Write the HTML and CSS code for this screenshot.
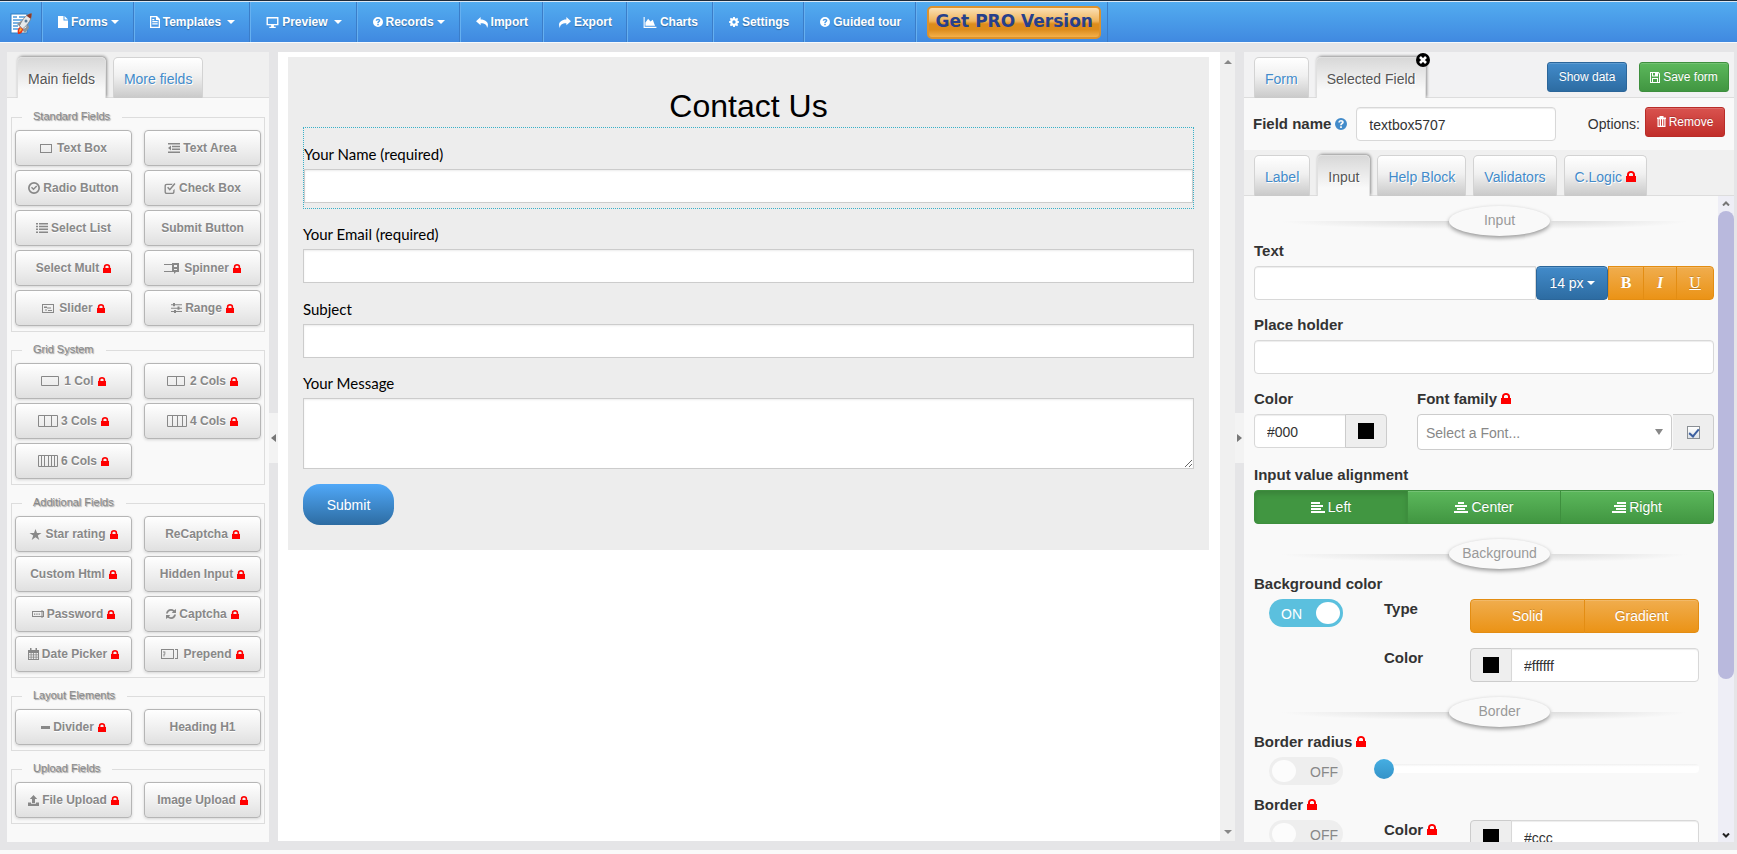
FILE: index.html
```html
<!DOCTYPE html>
<html lang="en">
<head>
<meta charset="utf-8">
<title>Form builder</title>
<link rel="stylesheet" href="styles.css">
</head>
<body>
<svg class="sprite" aria-hidden="true">
  <symbol id="i-lock" viewBox="0 0 10 11"><path fill-rule="evenodd" d="M1 5V3.5C1 1.300 2.600 0 5 0s4 1.300 4 3.500V5h1v6H0V5zM3 5h4V3.500C7 2.500 6.200 2 5 2s-2 .5-2 1.500z"/></symbol>
  <symbol id="i-file" viewBox="0 0 10 12"><path d="M0 0h5.500v4.500H10V12H0zM6.500 0 10 3.500H6.500z"/></symbol>
  <symbol id="i-doc" viewBox="0 0 10 12"><path fill-rule="evenodd" d="M0 0h7l3 3v9H0zm1.300 1.300v9.400h7.400V4H6V1.300zM2.300 5h5.400v1.200H2.300zm0 2.300h5.400v1.200H2.300zM2.300 3h2v1.200h-2z"/></symbol>
  <symbol id="i-screen" viewBox="0 0 13 12"><path fill-rule="evenodd" d="M0 0h13v9H8v1.500h2V12H3v-1.500h2V9H0zm1.500 1.500v6h10v-6z"/></symbol>
  <symbol id="i-help" viewBox="0 0 12 12"><path fill-rule="evenodd" d="M6 0a6 6 0 1 1 0 12A6 6 0 0 1 6 0zM3.300 4.500h1.800c0-.7.4-1 .9-1s.9.3.9.8c0 .9-1.800 1-1.800 2.900h1.700c0-1.200 2-1.300 2-3C8.800 2.900 7.600 2 6.100 2 4.400 2 3.300 3 3.300 4.500zM5.100 8.200v1.700h1.800V8.200z"/></symbol>
  <symbol id="i-import" viewBox="0 0 13 12"><path d="M0 4.500 5 0v2.700c5 0 8 2.800 8 5.800 0 1.300-.4 2.500-1 3.500C12 8.500 10 6.700 5 6.700V9z"/></symbol>
  <symbol id="i-export" viewBox="0 0 13 12"><path d="M13 4.500 8 0v2.700C3 2.700 0 5.500 0 8.500 0 9.800.4 11 1 12 1 8.500 3 6.700 8 6.700V9z"/></symbol>
  <symbol id="i-chart" viewBox="0 0 14 12"><path d="M0 0h1.200v10.500H14V12H0zM2 9.500V6l3-4 2.500 3L10 3l2.500 6.500z"/></symbol>
  <symbol id="i-gear" viewBox="0 0 12 12"><path fill-rule="evenodd" d="m5 0h2l.3 1.600 1 .4L9.700 1 11 2.300l-.9 1.400.4 1L12 5v2l-1.500.3-.4 1 .9 1.400L9.700 11l-1.400-.9-1 .4L7 12H5l-.3-1.500-1-.4-1.400.9L1 9.700l.9-1.400-.4-1L0 7V5l1.500-.3.400-1L1 2.300 2.300 1l1.400.9 1-.3zM6 4a2 2 0 1 0 0 4 2 2 0 0 0 0-4z"/></symbol>
  <symbol id="i-area" viewBox="0 0 12 10"><path d="M0 0h12v1.500H0zM4 2.800h8v1.500H4zM4 5.600h8v1.500H4zM0 8.500h12V10H0zM0 5l3-2.500v5z"/></symbol>
  <symbol id="i-radio" viewBox="0 0 12 12"><path fill-rule="evenodd" d="M6 0a6 6 0 1 1 0 12A6 6 0 0 1 6 0zm0 1.700a4.300 4.300 0 1 0 0 8.600 4.300 4.300 0 0 0 0-8.600zM3 5.700l1-1 1.500 1.500L8.200 3.500l1 1-3.700 3.800z"/></symbol>
  <symbol id="i-check" viewBox="0 0 12 12"><path d="M9 .8H2.500C1 .8 0 1.800 0 3.200v6.300C0 11 1 12 2.500 12h6c1.500 0 2.500-1 2.500-2.500V6.500L9.500 8v1.500c0 .6-.4 1-1 1h-6c-.6 0-1-.4-1-1V3.200c0-.6.4-1 1-1H8zM2.800 5.300 4 4.200l1.800 1.700L10.700 0 12 1.200 5.800 8.500z"/></symbol>
  <symbol id="i-list" viewBox="0 0 12 10"><path d="M0 0h2v1.500H0zM3 0h9v1.500H3zM0 2.800h2v1.500H0zM3 2.800h9v1.500H3zM0 5.600h2v1.500H0zM3 5.600h9v1.500H3zM0 8.500h2V10H0zM3 8.500h9V10H3z"/></symbol>
  <symbol id="i-spin" viewBox="0 0 15 11"><path fill-rule="evenodd" d="M0 1h8V0h7v9h-3l-2 2V9H0V8h8V2H0zM10 2v2h3V2zm0 4v1h3V6z"/></symbol>
  <symbol id="i-slider" viewBox="0 0 12 9"><path fill-rule="evenodd" d="M0 0h12v9H0zm1 1v7h10V1zM2 2.500h3V4H2zM5 3.500h4v1H5zM3 5.500h2v1H3zM6 6h4v1H6z"/></symbol>
  <symbol id="i-range" viewBox="0 0 11 10"><path d="M0 1.200h2V0h2v1.200h7v1H4v1H2v-1H0zM0 4.700h6.500V3.500h2v1.200H11v1H8.500v1h-2v-1H0zM0 8h3V7h2v1h6v1H5v1H3V9H0z"/></symbol>
  <symbol id="i-star" viewBox="0 0 12 11"><path d="m6 0 1.500 4H12L8.300 6.500 9.800 11 6 8.300 2.200 11l1.500-4.500L0 4h4.500z"/></symbol>
  <symbol id="i-pass" viewBox="0 0 12 8"><path fill-rule="evenodd" d="M0 1h9.500V0h1v1H12v6h-1.500v1h-1V7H0zm1 1v4h8.500V2zm9.500 0v4h.5V2zM2 3.500h1.300v1.300H2zm2.300 0h1.300v1.300H4.300zm2.300 0h1.300v1.300H6.600z"/></symbol>
  <symbol id="i-refresh" viewBox="0 0 11 11"><path d="M0 5C.3 2 2.500 0 5.500 0c1.400 0 2.600.5 3.600 1.300L11 0v4.500H6.300l1.500-1.700C7.100 2.200 6.400 2 5.500 2 3.800 2 2.500 3.200 2 5zM11 6c-.3 3-2.500 5-5.500 5-1.400 0-2.600-.5-3.600-1.300L0 11V6.500h4.700L3.200 8.200c.7.600 1.400.8 2.300.8C7.200 9 8.500 7.800 9 6z"/></symbol>
  <symbol id="i-cal" viewBox="0 0 11 12"><path fill-rule="evenodd" d="M0 2h2V0h1.500v2h4V0H9v2h2v10H0zm1 3v1.500h1.700V5zm2.500 0v1.500h1.700V5zM6 5v1.500h1.700V5zm2.500 0v1.500H10V5zM1 7.300v1.500h1.700V7.300zm2.500 0v1.500h1.700V7.300zM6 7.300v1.500h1.700V7.300zm2.500 0v1.500H10V7.300zM1 9.600V11h1.700V9.600zm2.500 0V11h1.700V9.600zM6 9.600V11h1.700V9.600zm2.500 0V11H10V9.600z"/></symbol>
  <symbol id="i-prep" viewBox="0 0 17 10"><path fill-rule="evenodd" d="M0 0h13v10H0zm1 1v8h11V1zM2 2.500h2.300V5.500H3.500V7.500h-1V4.800h1V3.500H2zM14 0h3v10h-3V9h2V1h-2z"/></symbol>
  <symbol id="i-upload" viewBox="0 0 11 11"><path d="m5.500 0 3.700 4H7v4H4V4H1.800zM0 7.500h3v1.300h5V7.500h3V11H0z"/></symbol>
  <symbol id="i-save" viewBox="0 0 10 11"><path fill-rule="evenodd" d="M0 0h8.500L10 1.500V11H0zm1 1v9h1V6h6v4h1V2L8 1v3.500H2V1zm2 0v2.500h2V1zm0 6v3h4V7z"/></symbol>
  <symbol id="i-trash" viewBox="0 0 9 11"><path fill-rule="evenodd" d="M2.500 0h4v1.500H9V3H8.500v8h-8V3H0V1.500h2.500zM1.700 3.200v6.600h1V3.200zm2.300 0v6.600h1V3.200zm2.300 0v6.600h1V3.200z"/></symbol>
  <symbol id="i-al" viewBox="0 0 14 11"><path d="M0 0h9v2H0zM0 3h12v2H0zM0 6h10v2H0zM0 9h14v2H0z"/></symbol>
  <symbol id="i-ac" viewBox="0 0 14 11"><path d="M4 0h6v2H4zM1 3h12v2H1zM3 6h8v2H3zM0 9h14v2H0z"/></symbol>
  <symbol id="i-ar" viewBox="0 0 14 11"><path d="M5 0h9v2H5zM2 3h12v2H2zM4 6h10v2H4zM0 9h14v2H0z"/></symbol>
  <symbol id="i-x" viewBox="0 0 14 14"><circle cx="7" cy="7" r="7"/><path d="m4 4 6 6m0-6-6 6" stroke="#fff" stroke-width="2.600"/></symbol>
</svg>

<header class="topbar">
  <a class="logo" href="#" aria-label="Home">
    <svg width="22" height="22" viewBox="0 0 22 22">
      <rect x="1" y="1" width="16" height="19" fill="#fff" stroke="#2f7fc4"/>
      <path d="M3 4h4M9 4h6M3 7h10M3 10h7M3 13h5M3 16h6" stroke="#4f9bdb" stroke-width="1.500"/>
      <path d="M11 16c4 0 6-2 7-5l1 4-4 5z" fill="#8f9499"/>
      <path d="M7 11l4-3 2 1-3 5z" fill="#8f9499"/>
      <path d="M21.500.5c-5 1-8 4-12 12l3 3.500c6-5 9-9 9-15.500z" fill="#e6e9eb" stroke="#777" stroke-width=".8"/>
      <path d="M21.500.5c-2 .4-3.500 1-5 2.200l4 3c.8-1.600 1-3 1-5.200z" fill="#8c3a2a"/>
      <circle cx="16" cy="8" r="1.500" fill="#5b7c99"/>
      <path d="M10 14c-2 1-3 4-2 7 3 0 5-2 5-5z" fill="#e5331c"/><path d="M10.500 15c-1 1-1.500 2-1.500 4 2-.5 2.500-1.500 3-3z" fill="#ffb02e"/>
    </svg>
  </a>
  <nav class="menu">
    <a href="#"><svg class="ic" width="10" height="12"><use href="#i-file"/></svg>Forms<i class="caret"></i></a>
    <a href="#"><svg class="ic" width="10" height="12"><use href="#i-doc"/></svg>Templates<i class="caret wide"></i></a>
    <a href="#"><svg class="ic" width="13" height="11"><use href="#i-screen"/></svg>Preview<i class="caret wide"></i></a>
    <a href="#"><svg class="ic" width="10" height="10"><use href="#i-help"/></svg>Records<i class="caret"></i></a>
    <a href="#"><svg class="ic" width="12" height="11"><use href="#i-import"/></svg>Import</a>
    <a href="#"><svg class="ic" width="12" height="11"><use href="#i-export"/></svg>Export</a>
    <a href="#"><svg class="ic" width="14" height="11"><use href="#i-chart"/></svg>Charts</a>
    <a href="#"><svg class="ic" width="10" height="10"><use href="#i-gear"/></svg>Settings</a>
    <a href="#"><svg class="ic" width="10" height="10"><use href="#i-help"/></svg>Guided tour</a>
    <span class="pro-cell"><button class="pro">Get PRO Version</button></span>
  </nav>
</header>

<main class="workspace">
  <aside class="panel fields">
    <div class="tabs" role="tablist">
      <button class="tab active" role="tab">Main fields</button>
      <button class="tab" role="tab">More fields</button>
    </div>
    <div class="groups">
      <fieldset class="group"><legend>Standard Fields</legend>
        <button class="tool"><svg class="ic gap" width="12" height="9"><rect x=".5" y=".5" width="11" height="8" fill="none" stroke="#888"/></svg>Text Box</button>
        <button class="tool"><svg class="ic" width="12" height="10"><use href="#i-area"/></svg>Text Area</button>
        <button class="tool"><svg class="ic" width="12" height="12"><use href="#i-radio"/></svg>Radio Button</button>
        <button class="tool"><svg class="ic" width="12" height="11"><use href="#i-check"/></svg>Check Box</button>
        <button class="tool"><svg class="ic" width="12" height="10"><use href="#i-list"/></svg>Select List</button>
        <button class="tool">Submit Button</button>
        <button class="tool">Select Mult<svg class="lock"><use href="#i-lock"/></svg></button>
        <button class="tool"><svg class="ic gap" width="15" height="11"><use href="#i-spin"/></svg>Spinner<svg class="lock"><use href="#i-lock"/></svg></button>
        <button class="tool"><svg class="ic gap" width="12" height="9"><use href="#i-slider"/></svg>Slider<svg class="lock"><use href="#i-lock"/></svg></button>
        <button class="tool"><svg class="ic" width="11" height="10"><use href="#i-range"/></svg>Range<svg class="lock"><use href="#i-lock"/></svg></button>
      </fieldset>
      <fieldset class="group"><legend>Grid System</legend>
        <button class="tool"><svg class="ic gap" width="18" height="10"><path d="M.5.5h17v9H.5z" fill="none" stroke="#888"/></svg>1 Col<svg class="lock"><use href="#i-lock"/></svg></button>
        <button class="tool"><svg class="ic gap" width="18" height="10"><path d="M.5.5h17v9H.5zM9.500.5v9" fill="none" stroke="#888"/></svg>2 Cols<svg class="lock"><use href="#i-lock"/></svg></button>
        <button class="tool"><svg class="ic" width="20" height="12"><path d="M.5.5h19v11H.5zM6.500.5v11M13.500.5v11" fill="none" stroke="#888"/></svg>3 Cols<svg class="lock"><use href="#i-lock"/></svg></button>
        <button class="tool"><svg class="ic" width="20" height="12"><path d="M.5.5h19v11H.5zM5.500.5v11M10.500.5v11M15.500.5v11" fill="none" stroke="#888"/></svg>4 Cols<svg class="lock"><use href="#i-lock"/></svg></button>
        <button class="tool"><svg class="ic" width="20" height="12"><path d="M.5.5h19v11H.5zM3.500.5v11M6.500.5v11M10.500.5v11M13.500.5v11M16.500.5v11" fill="none" stroke="#888"/></svg>6 Cols<svg class="lock"><use href="#i-lock"/></svg></button>
      </fieldset>
      <fieldset class="group"><legend>Additional Fields</legend>
        <button class="tool"><svg class="ic" width="13" height="11"><use href="#i-star"/></svg>Star rating<svg class="lock"><use href="#i-lock"/></svg></button>
        <button class="tool">ReCaptcha<svg class="lock"><use href="#i-lock"/></svg></button>
        <button class="tool">Custom Html<svg class="lock"><use href="#i-lock"/></svg></button>
        <button class="tool">Hidden Input<svg class="lock"><use href="#i-lock"/></svg></button>
        <button class="tool"><svg class="ic" width="12" height="8"><use href="#i-pass"/></svg>Password<svg class="lock"><use href="#i-lock"/></svg></button>
        <button class="tool"><svg class="ic" width="10" height="10"><use href="#i-refresh"/></svg>Captcha<svg class="lock"><use href="#i-lock"/></svg></button>
        <button class="tool"><svg class="ic" width="11" height="12"><use href="#i-cal"/></svg>Date Picker<svg class="lock"><use href="#i-lock"/></svg></button>
        <button class="tool"><svg class="ic gap" width="17" height="10"><use href="#i-prep"/></svg>Prepend<svg class="lock"><use href="#i-lock"/></svg></button>
      </fieldset>
      <fieldset class="group"><legend>Layout Elements</legend>
        <button class="tool"><svg class="ic" width="9" height="3"><path d="M0 0h9v3H0z"/></svg>Divider<svg class="lock"><use href="#i-lock"/></svg></button>
        <button class="tool">Heading H1</button>
      </fieldset>
      <fieldset class="group"><legend>Upload Fields</legend>
        <button class="tool"><svg class="ic" width="11" height="11"><use href="#i-upload"/></svg>File Upload<svg class="lock"><use href="#i-lock"/></svg></button>
        <button class="tool">Image Upload<svg class="lock"><use href="#i-lock"/></svg></button>
      </fieldset>
    </div>
  </aside>
  <div class="splitter"><button class="handle" aria-label="Collapse left panel"><svg width="5" height="8"><path d="M5 0v8L0 4z"/></svg></button></div>

  <section class="canvas">
    <form class="sheet">
      <h1>Contact Us</h1>
      <div class="row selected"><label for="f1">Your Name (required)</label><input id="f1" type="text"></div>
      <div class="row email"><label for="f2">Your Email (required)</label><input id="f2" type="text"></div>
      <div class="row"><label for="f3">Subject</label><input id="f3" type="text"></div>
      <div class="row"><label for="f4">Your Message</label><textarea id="f4"></textarea></div>
      <button type="button" class="submit">Submit</button>
    </form>
    <div class="rail"><svg width="8" height="4"><path d="M0 4h8L4 0z"/></svg><svg width="8" height="4"><path d="M0 0h8L4 4z"/></svg></div>
  </section>

  <div class="splitter"><button class="handle" aria-label="Collapse right panel"><svg width="5" height="8"><path d="M0 0v8l5-4z"/></svg></button></div>

  <aside class="panel props">
    <div class="tabs top" role="tablist">
      <button class="tab" role="tab">Form</button>
      <span class="closable"><button class="tab active" role="tab">Selected Field</button><button class="close" aria-label="Close"><svg width="14" height="14"><use href="#i-x"/></svg></button></span>
      <span class="actions"><button class="btn blue small">Show data</button><button class="btn green small"><svg class="ic" width="10" height="11"><use href="#i-save"/></svg>Save form</button></span>
    </div>
    <div class="namebar">
      <label class="b" for="fname">Field name</label><svg class="info" width="12" height="12"><use href="#i-help"/></svg>
      <input class="text" id="fname" type="text" value="textbox5707">
      <span class="options">Options:</span><button class="btn red small"><svg class="ic" width="9" height="11"><use href="#i-trash"/></svg>Remove</button>
    </div>
    <div class="tabs sub" role="tablist">
      <button class="tab" role="tab">Label</button>
      <button class="tab active" role="tab">Input</button>
      <button class="tab" role="tab">Help Block</button>
      <button class="tab" role="tab">Validators</button>
      <button class="tab" role="tab">C.Logic<svg class="lock"><use href="#i-lock"/></svg></button>
    </div>
    <div class="scroller">
      <div class="content">
        <h2 class="divider"><span>Input</span></h2>
        <div class="item"><label class="b" for="p1">Text</label>
          <div class="combo"><input class="text" id="p1" type="text"><button class="btn blue size">14 px<i class="caret"></i></button><button class="btn orange fmt">B</button><button class="btn orange fmt it">I</button><button class="btn orange fmt un">U</button></div></div>
        <div class="item"><label class="b" for="p2">Place holder</label><input class="text full" id="p2" type="text"></div>
        <div class="item pair">
          <div><label class="b" for="p3">Color</label><div class="combo"><input class="text" id="p3" type="text" value="#000"><button class="swatch" aria-label="Pick color"></button></div></div>
          <div><label class="b" for="p4">Font family<svg class="lock"><use href="#i-lock"/></svg></label><div class="combo font"><span class="pick"><select id="p4"><option>Select a Font...</option></select></span><span class="addon"><input type="checkbox" checked aria-label="Use font"></span></div></div>
        </div>
        <div class="item"><span class="b">Input value alignment</span>
          <div class="combo even"><button class="btn green pressed"><svg class="ic" width="14" height="11"><use href="#i-al"/></svg>Left</button><button class="btn green"><svg class="ic" width="14" height="11"><use href="#i-ac"/></svg>Center</button><button class="btn green"><svg class="ic" width="14" height="11"><use href="#i-ar"/></svg>Right</button></div></div>
        <h2 class="divider"><span>Background</span></h2>
        <span class="b">Background color</span>
        <div class="grid">
          <label class="toggle"><input type="checkbox" checked><span>ON</span></label>
          <span class="b">Type</span>
          <div class="combo even"><button class="btn orange">Solid</button><button class="btn orange">Gradient</button></div>
          <label class="b second" for="p5">Color</label>
          <div class="combo"><button class="swatch" aria-label="Pick color"></button><input class="text" id="p5" type="text" value="#ffffff"></div>
        </div>
        <h2 class="divider"><span>Border</span></h2>
        <span class="b">Border radius<svg class="lock"><use href="#i-lock"/></svg></span>
        <div class="grid tight">
          <label class="toggle"><input type="checkbox"><span>OFF</span></label>
          <input class="range" type="range" min="0" max="50" value="0" aria-label="Border radius">
        </div>
        <span class="b">Border<svg class="lock"><use href="#i-lock"/></svg></span>
        <div class="grid">
          <label class="toggle"><input type="checkbox"><span>OFF</span></label>
          <label class="b" for="p6">Color<svg class="lock"><use href="#i-lock"/></svg></label>
          <div class="combo"><button class="swatch" aria-label="Pick color"></button><input class="text" id="p6" type="text" value="#ccc"></div>
        </div>
      </div>
      <div class="vbar"><svg width="8" height="5"><path d="m1 4.500 3-3 3 3"/></svg><i class="thumb"></i><svg class="dark" width="8" height="5"><path d="m1 .5 3 3 3-3"/></svg></div>
    </div>
  </aside>
</main>
</body>
</html>
```
FILE: styles.css
```css
* { box-sizing: border-box; }
body {
  margin: 0;
  height: 100vh;
  display: flex;
  flex-direction: column;
  overflow: hidden;
  background: #e5e5e7;
  border-top: 1px solid #1d2b3a;
  border-bottom: 4px solid #fafafa;
  font: 14px/20px "Liberation Sans", Arial, sans-serif;
  color: #333;
}
button, input, select, textarea { font: inherit; color: inherit; margin: 0; }
button { cursor: pointer; }
a { text-decoration: none; }
.sprite { position: absolute; width: 0; height: 0; }
.ic { fill: currentColor; flex: none; margin-right: 3px; }
.ic.gap { margin-right: 5px; }
.lock { width: 8px; height: 9px; fill: #f00; flex: none; margin-left: 4px; }

/* top bar */
.topbar {
  flex: none;
  display: flex;
  height: 42px;
  border-top: 1px solid #dce8f4;
  border-bottom: 1px solid #f6f9fc;
  background: linear-gradient(#52acf0, #4089e0);
}
.logo { width: 42px; padding: 11px 0 0 10px; border-right: 1px solid #3b7dc8; }
.menu { display: flex; }
.menu a, .pro-cell {
  display: flex;
  align-items: center;
  padding: 0 14px 0 15px;
  border-left: 1px solid #66b0f0;
  border-right: 1px solid #3b7dc8;
  color: #fff;
  font-size: 12px;
  font-weight: bold;
  text-shadow: 0 1px 1px rgba(0, 0, 0, .3);
}
.caret { border: 4px solid transparent; border-top-color: currentColor; border-bottom: 0; margin-left: 3px; }
.caret.wide { margin-left: 6px; }
.menu .pro-cell { padding: 0 6px 0 10px; }
.pro {
  width: 174px;
  height: 33px;
  padding: 0 0 3px;
  border: 2px solid #dd922c;
  border-radius: 5px;
  background: linear-gradient(#fbe0b4 0, #f0b45c 45%, #dd8c1c 55%, #dd8c1c 75%, #f3b04a);
  color: #27408b;
  font: bold 17px "DejaVu Sans", Verdana, sans-serif;
  white-space: nowrap;
}

/* workspace */
.workspace {
  flex: 1;
  min-height: 0;
  display: grid;
  grid-template-columns: 262px 9px minmax(0, 1fr) 9px 490px;
  padding: 9px 3px 8px 7px;
}
.panel { display: flex; flex-direction: column; min-height: 0; background: #f9f9f9; }
.splitter { display: flex; padding-bottom: 18px; align-items: center; }
.handle { width: 9px; height: 50px; padding: 0; border: 0; background: #f3f3f3; fill: #777; display: flex; align-items: center; justify-content: center; }

/* tabs */
.tabs {
  flex: none;
  display: flex;
  align-items: flex-end;
  gap: 7px;
  height: 46px;
  padding: 0 10px;
  background: #f0f0f0;
  box-shadow: inset 0 -1px #ddd;
}
.tab {
  display: flex;
  align-items: center;
  height: 41px;
  padding: 1px 10px 0;
  border: 1px solid #d3d3d3;
  border-bottom: 0;
  border-radius: 5px 5px 0 0;
  background: linear-gradient(#fff, #f0f0f0 45%, #c9c9c9);
  color: #428bca;
  text-shadow: 1px 1px #fff;
  white-space: nowrap;
}
.tab.active {
  background: linear-gradient(#d8d8d8, #f9f9f9 80%);
  color: #555;
  border-color: #e0e0e0;
  box-shadow: 1px -1px 3px rgba(0, 0, 0, .4);
  clip-path: inset(-5px -5px 0 -5px);
}
.tab .lock, .b .lock { width: 10px; height: 11px; }
.tabs.top { background: #f2f2f3; }
.closable { position: relative; }
.close { position: absolute; top: -4px; right: -4px; padding: 0; border: 0; background: none; display: flex; }
.actions { display: flex; gap: 12px; margin: 0 -5px 6px auto; }

/* left palette */
.groups { padding: 12px 4px 0; overflow: hidden; }
.group {
  display: grid;
  grid-template-columns: 1fr 1fr;
  gap: 4px 12px;
  margin: 0 0 11px;
  padding: 6px 3px 5px;
  border: 1px solid #ddd;
}
.group legend {
  margin-left: 7px;
  padding: 0 12px 0 11px;
  height: 14px;
  font-size: 11px;
  line-height: 12px;
  color: #888;
  text-shadow: 1px 1px 1px #999;
}
.tool {
  display: flex;
  align-items: center;
  justify-content: center;
  height: 36px;
  padding: 0;
  border: 1px solid #b5b5b5;
  border-radius: 4px;
  background: linear-gradient(#fff, #ededed 60%, #e0e0e0);
  box-shadow: 0 1px 3px rgba(0, 0, 0, .15);
  color: #888;
  font-size: 12px;
  font-weight: bold;
  text-shadow: 0 1px #fff;
  white-space: nowrap;
}

/* canvas */
.canvas { display: flex; align-items: flex-start; background: #fff; margin-bottom: 1px; }
.sheet { flex: 1; margin: 5px 11px 0 10px; padding: 32px 15px 25px; background: #ededed; color: #000; }
.sheet h1 { margin: 0; font-size: 32px; line-height: 34px; font-weight: normal; text-align: center; }
.row { margin-bottom: 15px; }
.row label { display: block; padding-bottom: 5px; font-family: Lato, sans-serif; font-size: 15px; }
.row input, .row textarea { display: block; width: 100%; height: 34px; border: 1px solid #ccc; box-shadow: inset 0 1px 2px rgba(0, 0, 0, .08); background: #fff; }
.row textarea { height: 71px; }
.row.selected { margin-top: 4px; padding: 16px 0 5px; border: 1px dotted #3ab0c8; }
.row.email { margin-bottom: 16px; }
.submit { display: block; width: 91px; height: 41px; border: 0; border-radius: 17px; background: linear-gradient(#50a8f8, #2d6ca2); color: #fff; }
.rail { align-self: stretch; width: 15px; display: flex; flex-direction: column; justify-content: space-between; align-items: center; padding: 8px 0 7px; background: #f0f0f0; fill: #888; }

/* buttons and inputs */
.btn { display: flex; align-items: center; justify-content: center; height: 34px; padding: 0 10px; border: 1px solid; border-radius: 3px; color: #fff; text-shadow: 0 -1px rgba(0, 0, 0, .2); white-space: nowrap; box-shadow: inset 0 1px rgba(255, 255, 255, .15); }
.btn.small { height: 30px; font-size: 12px; }
.btn.blue { background: linear-gradient(#428bca, #2d6ca2); border-color: #2b669a; }
.btn.green { background: linear-gradient(#5cb85c, #419641); border-color: #3e8f3e; }
.btn.red { background: linear-gradient(#d9534f, #c12e2a); border-color: #b92c28; }
.btn.orange { background: linear-gradient(#f0ad4e, #eb9316); border-color: #e38d13; }
.btn.pressed { background: #419641; box-shadow: inset 0 3px 5px rgba(0, 0, 0, .13); }
.text { height: 34px; min-width: 0; padding: 2px 12px 0; border: 1px solid #d8d8d8; border-radius: 4px; background: #fff; box-shadow: inset 0 1px 1px rgba(0, 0, 0, .075); }
.text.full { width: 100%; }
.b { display: block; font-size: 15px; font-weight: bold; white-space: nowrap; }

.namebar { flex: none; display: flex; align-items: center; height: 52px; padding: 1px 9px 2px 9px; }
.namebar .info { margin: 0 9px 0 4px; fill: #428bca; }
.namebar .text { flex: 0 1 200px; }
.options { margin: 0 5px 0 auto; }
.actions .small { min-width: 80px; }
.actions .green { min-width: 90px; }
.namebar .red { width: 80px; margin-top: -4px; }

.scroller { flex: 1; min-height: 0; display: flex; overflow: hidden; }
.content { flex: 1; min-width: 0; padding: 10px 4px 0 10px; overflow: hidden; }
.vbar { width: 16px; display: flex; flex-direction: column; align-items: center; padding: 5px 0 4px; background: #eeeef6; fill: none; stroke: #777; stroke-width: 2; }
.vbar .dark { margin-top: auto; stroke: #222; }
.thumb { width: 16px; height: 468px; margin-top: 5px; border-radius: 8px; background: #b9b9dd; }
.divider { display: grid; grid-template-columns: 195fr 101px 164fr; margin: 0 0 5px; height: 30px; font-size: 14px; line-height: 28px; font-weight: normal; color: #999; }
.divider span { border-radius: 50%; text-align: center; background: #f9f9f9; box-shadow: 0 2px 4px rgba(0, 0, 0, .4); }
.divider::before, .divider::after { content: ""; height: 8px; margin-top: 15px; background: radial-gradient(ellipse at 100% 0, #ddd, transparent 70%); }
.divider::before { margin-left: 25px; }
.divider::after { margin-right: 25px; background: radial-gradient(ellipse at 0 0, #ddd, transparent 70%); }
.item { margin-bottom: 15px; }
.item .b { margin-bottom: 5px; }
.combo { display: flex; min-width: 0; }
.combo > * { border-radius: 0; }
.combo > :first-child { border-radius: 4px 0 0 4px; }
.combo > :last-child { border-radius: 0 4px 4px 0; }
.combo .text { flex: 1; }
.combo.even > * { flex: 1; }
.combo.even > * + *, .fmt + .fmt { margin-left: -1px; }
.combo .size { width: 72px; border-radius: 4px; }
.fmt { width: 36px; font: bold 16px "Liberation Serif", serif; }
.it { width: 34px; font-style: italic; }
.un { width: 38px; font-weight: normal; text-decoration: underline; }
.swatch { flex: none; width: 42px; height: 34px; padding: 0; border: 1px solid #ccc; background: linear-gradient(#000, #000) center / 16px 16px no-repeat #eee; }
.swatch:last-child { margin-left: -1px; }
.swatch + .text { margin-left: -1px; }
.pair { display: grid; grid-template-columns: 133px 1fr; column-gap: 30px; }
.font { height: 36px; }
.font .pick { position: relative; flex: 1; border: 1px solid #ccc; border-radius: 4px; background: #fff; }
.pick select { width: 100%; height: 34px; padding: 2px 8px 0; border: 0; background: none; color: #888; appearance: none; }
.pick::after { content: ""; position: absolute; right: 8px; top: 14px; border: 4px solid transparent; border-top: 6px solid #888; border-bottom: 0; }
.addon { width: 41px; margin-left: 1px; display: flex; align-items: center; justify-content: center; border: 1px solid #ccc; border-left: 0; background: #eee; }
.addon input { width: 13px; height: 13px; appearance: none; border: 1px solid #8a8f94; background: linear-gradient(#fff, #dde2e6); }
.addon input::after { content: ""; display: block; width: 4px; height: 8px; margin: 0 0 0 3px; border: solid #3b5fa0; border-width: 0 2px 2px 0; transform: rotate(40deg); }
.grid { display: grid; grid-template-columns: 115px 86px minmax(0, 1fr); row-gap: 15px; padding: 5px 15px 15px; align-items: start; }
.grid.tight { padding-bottom: 10px; }
.second { grid-column: 2; }
.toggle { position: relative; display: flex; width: 74px; height: 28px; }
.toggle input { appearance: none; width: 74px; height: 28px; border-radius: 14px; background: #eee; }
.toggle input::before { content: ""; display: block; width: 24px; height: 22px; margin: 3px; border-radius: 50%; background: #fcfcfc; }
.toggle input:checked { background: #5bc0de; }
.toggle input:checked::before { margin-left: 47px; background: #fff; }
.toggle span { position: absolute; top: 5px; right: 5px; color: #888; }
.toggle input:checked + span { left: 12px; color: #fff; }
.range { appearance: none; grid-column: 2 / 4; height: 9px; margin: 7px 0 0 -10px; background: linear-gradient(#f0f0f0, #fff 30%); border-radius: 4px; }
.range::-webkit-slider-thumb { appearance: none; width: 20px; height: 20px; border-radius: 50%; background: linear-gradient(#45aee2, #3593c8); }
.range::-moz-range-thumb { width: 20px; height: 20px; border: 0; border-radius: 50%; background: #3ea1d6; }
```
